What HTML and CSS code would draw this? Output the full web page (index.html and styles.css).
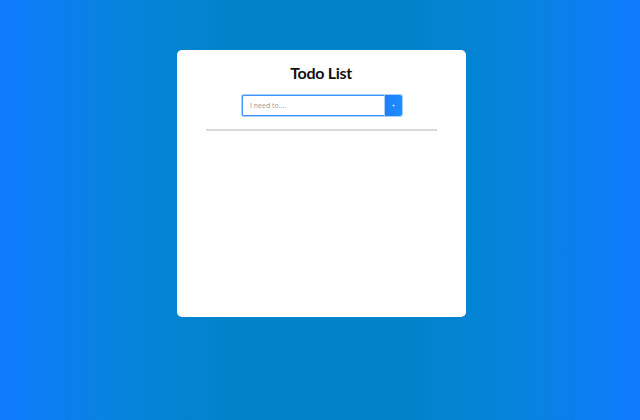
FILE: index.html
```
<!DOCTYPE html>
<html>
<head>
<meta charset="utf-8">
<link rel="stylesheet" href="styles.css">
</head>
<body>
<div class="card">
  <h1 class="title">Todo List</h1>
  <form class="add-form">
    <input class="add-input" type="text" placeholder="I need to....">
    <button class="add-btn" type="button">+</button>
  </form>
  <hr class="divider">
  <ul class="list"></ul>
</div>
</body>
</html>
```
FILE: styles.css
```
html, body {
  margin: 0;
  height: 100%;
}
body {
  background: linear-gradient(to right, #0f7bff 0%, #0584d8 22%, #0083c8 38%, #0083c8 62%, #0584d8 78%, #0f7bff 100%);
  font-family: "Lato", "Open Sans", sans-serif;
  overflow: hidden;
}
.card {
  box-sizing: border-box;
  width: 289px;
  height: 267px;
  margin: 50px auto 0;
  padding: 12px 29px 0;
  background: #fff;
  border-radius: 5px;
  display: flex;
  flex-direction: column;
  align-items: center;
  position: relative;
  left: 1px;
}
.title {
  margin: 0;
  font-family: "Lato", sans-serif;
  font-size: 16px;
  line-height: 21px;
  font-weight: 700;
  color: #111;
  letter-spacing: -0.3px;
}
.add-form {
  display: flex;
  margin-top: 12px;
  width: 160px;
  height: 21px;
  position: relative;
  left: 1px;
}
.add-input {
  flex: 1;
  min-width: 0;
  box-sizing: border-box;
  height: 21px;
  margin: 0;
  border: 1px solid #3d95ff;
  border-right: none;
  border-radius: 2px 0 0 2px;
  box-shadow: 0 0 0 1px #a9cfff;
  padding: 0 7px;
  font-family: "Open Sans", sans-serif;
  font-size: 7px;
  outline: none;
}
.add-input::placeholder {
  color: #999;
}
.add-btn {
  width: 17px;
  height: 21px;
  margin: 0;
  padding: 0;
  border: none;
  border-radius: 0 2px 2px 0;
  background: linear-gradient(to right, #1f7dff, #1a8fff);
  color: #fff;
  font-size: 5px;
  line-height: 21px;
  box-shadow: 0 0 0 1px #a9cfff;
}
.divider {
  width: 100%;
  height: 2px;
  border: none;
  background: #d9d9d9;
  margin: 13px 0 0;
}
.list {
  margin: 0;
  padding: 0;
  list-style: none;
}
```
